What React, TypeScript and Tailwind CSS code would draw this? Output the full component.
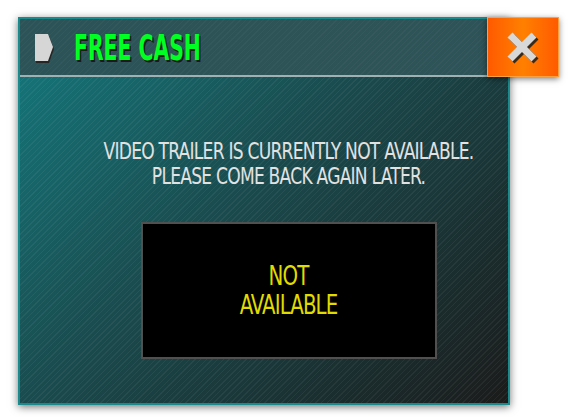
import React from 'react';

const font = { fontFamily: '"Liberation Sans Narrow", "DejaVu Sans Condensed", "Liberation Sans", sans-serif' };

export default function App() {
  return (
    <div className="w-[573px] h-[417px] bg-white relative overflow-hidden" style={font}>
      <div className="absolute left-[18px] top-[17px] w-[492px] h-[388px] border-2 border-[#1b8a8c] shadow-[0_2px_8px_rgba(0,0,0,0.55)] flex flex-col bg-[repeating-linear-gradient(135deg,rgba(255,255,255,0.05)_0px,rgba(255,255,255,0.05)_1px,transparent_1px,transparent_4px),linear-gradient(135deg,#137a7e_0%,#1a4b4e_45%,#1b1b1b_100%)]">
        {/* Header */}
        <div className="h-[58px] shrink-0 flex items-center border-b-2 border-[#9fb1b2] bg-[repeating-linear-gradient(135deg,rgba(255,255,255,0.03)_0px,rgba(255,255,255,0.03)_1px,transparent_1px,transparent_4px),linear-gradient(90deg,#2c5357,#2f5358)]">
          <svg width="21" height="30" viewBox="0 0 21 30" className="ml-[15px] mt-[3px]">
            <polygon points="1,2 14,2 19,15 14,29 1,29" fill="#262626" />
            <polygon points="0,0 13,0 18,13 13,27 0,27" fill="#d6d6d6" />
          </svg>
          <h1 className="ml-[18px] text-[#00ff22] text-[31px] font-bold origin-left scale-x-[0.73] scale-y-[1.15] [text-shadow:2px_2px_0_#1a1a1a]">FREE CASH</h1>
        </div>
        {/* Body */}
        <div className="flex-1 flex flex-col items-center pl-[49px]">
          <p className="mt-[66px] text-center text-[#e2e2e2] text-[19px] leading-[21px] tracking-[-0.75px] scale-y-[1.2]">
            VIDEO TRAILER IS CURRENTLY NOT AVAILABLE.<br />PLEASE COME BACK AGAIN LATER.
          </p>
          <div className="mt-[37px] w-[296px] h-[137px] bg-black border-2 border-[#505050] flex items-center justify-center">
            <p className="text-center text-[#e0dc00] text-[22px] leading-[24px] tracking-[-0.9px] scale-y-[1.2]">NOT<br />AVAILABLE</p>
          </div>
        </div>
        {/* Close */}
        <button className="absolute right-[-51px] top-[-2px] w-[72px] h-[60px] border border-[#ffa040] bg-[linear-gradient(90deg,#ff5a00,#ff8000_50%,#ff5a00)] shadow-[0_2px_6px_rgba(0,0,0,0.5)] flex items-center justify-center">
          <svg width="34" height="34" viewBox="0 0 34 34">
            <g stroke="#3a2a1a" strokeWidth="7">
              <line x1="6" y1="7" x2="30" y2="31" />
              <line x1="30" y1="7" x2="6" y2="31" />
            </g>
            <g stroke="#d8d8d8" strokeWidth="7">
              <line x1="4" y1="5" x2="28" y2="29" />
              <line x1="28" y1="5" x2="4" y2="29" />
            </g>
          </svg>
        </button>
      </div>
    </div>
  );
}
